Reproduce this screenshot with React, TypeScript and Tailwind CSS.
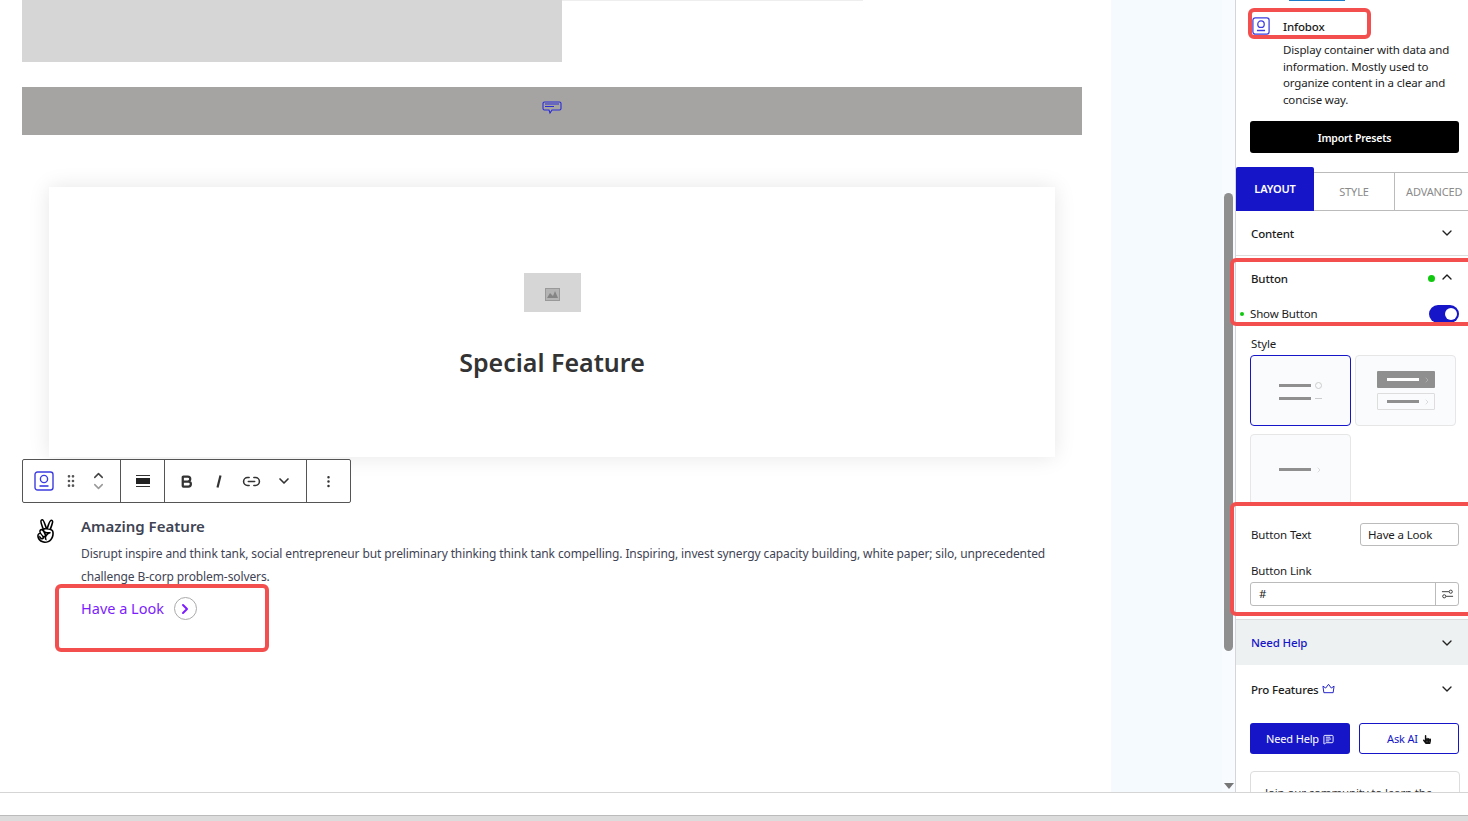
import React from 'react';
import { Bold, ChevronDown, ChevronRight, ChevronUp, Link2, MessageSquareText, MoreVertical, GripVertical } from 'lucide-react';
import { FaAngellist, FaHandPointer } from 'react-icons/fa';

const InfoboxIcon: React.FC<{ className?: string }> = ({ className }) => (
  <svg viewBox="0 0 20 20" fill="none" stroke="#3d3de0" strokeWidth="1.4" className={className}>
    <rect x="1" y="1" width="18" height="18" rx="2.5" />
    <circle cx="10" cy="8" r="3.6" />
    <path d="M5.5 15h9" strokeWidth="1.6" />
  </svg>
);

const Line: React.FC<{ className?: string }> = ({ className }) => (
  <div className={`h-[3px] w-8 ${className ?? 'bg-[#8f8f8f]'}`} />
);

const Redbox: React.FC<{ className: string }> = ({ className }) => (
  <div className={`absolute border-4 border-[#f44f4f] rounded-[6px] pointer-events-none ${className}`} />
);

const AccordionRow: React.FC<{ label: React.ReactNode; className?: string }> = ({ label, className }) => (
  <div className={`flex items-center justify-between pl-[15px] pr-[13px] ${className}`}>
    <span className="pt-px">{label}</span>
    <ChevronDown className="w-4 h-4 text-[#222]" />
  </div>
);

const Canvas: React.FC = () => (
  <div className="w-[1111px] h-full bg-white relative px-[22px] overflow-hidden">
    <div className="h-px w-[401px] bg-[#eeeeee] ml-[440px] -mb-px" />
    <div className="w-[540px] h-[62px] bg-[#d6d6d6]" />
    <div className="w-[1060px] h-12 mt-[25px] bg-[#a5a4a2] flex justify-center pt-[14px]">
      <svg viewBox="0 0 20 14" fill="none" stroke="#2a2ad8" strokeWidth="1.1" className="w-5 h-[14px]">
        <path d="M2.5 1h15a1.5 1.5 0 0 1 1.5 1.5v5a1.500 1.500 0 0 1-1.500 1.500H10l-2 3-1-3H2.500A1.500 1.500 0 0 1 1 7.500v-5A1.500 1.500 0 0 1 2.500 1z" />
        <path d="M3 3h14M3 5.500h9" />
      </svg>
    </div>
    <div className="w-[1006px] h-[270px] mt-[52px] ml-[27px] bg-white shadow-[0_0_20px_rgba(0,0,0,0.1)] flex flex-col items-center pt-[86px]">
      <div className="w-[57px] h-[39px] bg-[#d6d6d6] flex items-center justify-center">
        <svg viewBox="0 0 15 13" className="w-[15px] h-[13px] mt-[3px]">
          <rect x="0.5" y="0.5" width="14" height="12" fill="#b4b4b4" stroke="#999" />
          <path d="M2 10l3-5 3 3 2-5 3 7z" fill="#858585" />
        </svg>
      </div>
      <div className="mt-[31px] text-[25px] leading-[38px] font-semibold text-[#333]">Special Feature</div>
    </div>
    <div className="w-[329px] h-11 mt-[2px] border border-[#555] rounded-[2px] bg-white flex items-stretch text-[#333]">
      <div className="w-[98px] border-r border-[#555] flex items-center pl-[11px]">
        <InfoboxIcon className="w-5 h-5" />
        <GripVertical className="w-4 h-4 ml-[9px] text-[#555]" strokeWidth={2} />
        <div className="flex flex-col ml-3 -space-y-1">
          <ChevronUp className="w-[15px] h-[15px] text-[#444]" strokeWidth={2.4} />
          <ChevronDown className="w-[15px] h-[15px] text-[#999]" strokeWidth={2.4} />
        </div>
      </div>
      <div className="w-11 border-r border-[#555] flex flex-col items-center justify-center gap-[2px]">
        <div className="w-[14px] h-px bg-[#333]" />
        <div className="w-[14px] h-[6px] bg-[#222]" />
        <div className="w-[14px] h-px bg-[#333]" />
      </div>
      <div className="w-[142px] border-r border-[#555] flex items-center pl-[14px]">
        <Bold className="w-[15px] h-[15px]" strokeWidth={3.6} />
        <svg viewBox="0 0 15 15" className="w-[15px] h-[15px] ml-[17px]" stroke="#333" strokeWidth="2.2">
          <path d="M9.500 1.500L6.500 13.500" />
        </svg>
        <Link2 className="w-[19px] h-[19px] ml-[16px]" strokeWidth={2} />
        <ChevronDown className="w-4 h-4 ml-[15px]" strokeWidth={2.5} />
      </div>
      <div className="flex-1 flex items-center justify-center">
        <MoreVertical className="w-[15px] h-[15px]" strokeWidth={2} />
      </div>
    </div>
    <div className="flex mt-[11px] pl-3">
      <FaAngellist className="w-[23px] h-6 mt-[5px] text-black" />
      <div className="ml-6 text-[#3f4454]">
        <div className="text-[15px] leading-[24px] font-semibold">Amazing Feature</div>
        <p className="text-[12px] tracking-[-0.11px] leading-[23px] mt-1 whitespace-nowrap">
          Disrupt inspire and think tank, social entrepreneur but preliminary thinking think tank compelling. Inspiring, invest synergy capacity building, white paper; silo, unprecedented
          <br />
          challenge B-corp problem-solvers.
        </p>
        <div className="flex items-center mt-[9px] text-[14.5px] text-[#7c1dff]">
          Have a Look
          <span className="ml-[10px] w-[23px] h-[23px] rounded-full border border-[#aaa] flex items-center justify-center">
            <ChevronRight className="w-4 h-4" strokeWidth={3} />
          </span>
        </div>
      </div>
    </div>
  </div>
);

const Sidebar: React.FC = () => (
  <div className="w-[233px] h-full bg-white border-l border-[#d5d5d5] overflow-hidden text-[11.5px] tracking-[-0.15px] text-[#1c1c1c] relative">
    <div className="h-px w-14 bg-[#1c7cc8] ml-[53px]" />
    <div className="flex items-start pl-[16px] pt-4">
      <InfoboxIcon className="w-[18px] h-[18px] shrink-0" />
      <div className="ml-[13px] pr-2">
        <div className="leading-5 font-medium">Infobox</div>
        <p className="leading-[16.5px] mt-[5px]">
          Display container with data and information. Mostly used to organize content in a clear and concise way.
        </p>
      </div>
    </div>
    <div className="mx-[14px] mr-[9px] mt-[13px] h-8 pt-[3px] rounded-[3px] bg-black text-white text-[10.5px] tracking-[-0.2px] font-semibold flex items-center justify-center">
      Import Presets
    </div>
    <div className="flex items-end mt-[14px] text-[11px] text-[#8a8a8a]">
      <div className="w-[78px] h-11 bg-[#1616c8] rounded-t-[2px] text-white font-semibold flex items-center justify-center">LAYOUT</div>
      <div className="w-[81px] h-[39px] pt-[2px] border-t border-r border-b border-[#bbb] flex items-center justify-center">STYLE</div>
      <div className="w-[73px] h-[39px] pt-[2px] border-t border-b border-[#bbb] flex items-center pl-[11px] whitespace-nowrap">ADVANCED</div>
    </div>
    <AccordionRow label="Content" className="h-[45px] font-medium border-b border-[#ddd]" />
    <div className="flex items-center justify-between pl-[15px] pr-[13px] h-[45px] font-medium">
      <span>Button</span>
      <span className="flex items-center gap-1">
        <span className="w-[7px] h-[7px] rounded-full bg-[#0fc90f]" />
        <ChevronUp className="w-4 h-4 -mt-[3px]" />
      </span>
    </div>
    <div className="flex items-center justify-between pl-[4px] pr-[9px] h-6 mt-[1px]">
      <span className="flex items-center gap-[6px]">
        <span className="w-1 h-1 rounded-full bg-[#0fc90f]" />
        Show Button
      </span>
      <span className="w-[30px] h-[18px] rounded-full bg-[#1616c8] flex items-center justify-end pr-[2px]">
        <span className="w-[12px] h-[12px] rounded-full bg-white" />
      </span>
    </div>
    <div className="px-[14px] mt-[8px]">
      <div className="leading-5 pl-px">Style</div>
      <div className="grid grid-cols-[101px_101px] gap-x-1 gap-y-2 mt-[1px]">
        <div className="h-[71px] rounded-[4px] border border-[#1616c8] bg-[#fafbfd] flex flex-col items-center justify-center gap-2">
          <div className="flex items-center gap-1"><Line /><span className="w-[7px] h-[7px] rounded-full border border-[#ccc]" /></div>
          <div className="flex items-center gap-1"><Line /><span className="w-[7px] h-px bg-[#ccc]" /></div>
        </div>
        <div className="h-[71px] rounded-[4px] border border-[#e6e6e6] bg-[#fafbfd] flex flex-col items-center justify-center gap-[5px]">
          <div className="w-[58px] h-[17px] rounded-[1px] bg-[#8f8f8f] flex items-center pl-[10px] gap-1">
            <Line className="bg-white" />
            <ChevronRight className="w-2 h-2 text-[#bbb]" />
          </div>
          <div className="w-[58px] h-[17px] rounded-[1px] border border-[#ddd] flex items-center pl-[9px] gap-1">
            <Line />
            <ChevronRight className="w-2 h-2 text-[#ccc]" />
          </div>
        </div>
        <div className="h-[71px] rounded-[4px] border border-[#e6e6e6] bg-[#fafbfd] flex items-center justify-center gap-1">
          <Line />
          <ChevronRight className="w-2 h-2 text-[#ccc]" />
        </div>
      </div>
    </div>
    <div className="flex items-center justify-between pl-[15px] pr-[9px] mt-[18px] h-[23px]">
      <span>Button Text</span>
      <span className="w-[99px] h-[23px] px-[7px] border border-[#bbb] rounded-[3px] flex items-center">Have a Look</span>
    </div>
    <div className="pl-[15px] pr-[9px] mt-[15px] leading-[20px]">Button Link</div>
    <div className="mx-[14px] mr-[9px] h-6 mt-px border border-[#bbb] rounded-[3px] flex items-center">
      <span className="flex-1 pl-2">#</span>
      <span className="w-[23px] h-full border-l border-[#bbb] flex items-center justify-center">
        <svg viewBox="0 0 14 10" fill="none" stroke="#333" strokeWidth="1" className="w-[13px] h-[10px]">
          <circle cx="10.500" cy="2.500" r="1.700" />
          <circle cx="3.500" cy="7.500" r="1.700" />
          <path d="M1 2.500h7.500M5.500 7.500H13" />
        </svg>
      </span>
    </div>
    <div className="h-px bg-[#ddd] mt-[13px]" />
    <AccordionRow label="Need Help" className="h-[45px] bg-[#eef1f2] text-[#1616c8] font-medium" />
    <AccordionRow
      label={
        <span className="flex items-center gap-[3px]">
          Pro Features
          <svg viewBox="0 0 14 11" fill="none" stroke="#1616c8" strokeWidth="1" className="w-[13px] h-[11px] -mt-[2px]">
            <path d="M1 3l3 2 3-4 3 4 3-2-1 7H2z" />
          </svg>
        </span>
      }
      className="h-12 font-medium"
    />
    <div className="flex gap-[9px] pl-[14px] pr-[9px] mt-[10px] text-[11px]">
      <div className="w-[100px] h-[31px] pt-px rounded-[3px] bg-[#1616c8] text-white flex items-center justify-center gap-1">
        Need Help <MessageSquareText className="w-[11px] h-[11px]" />
      </div>
      <div className="w-[100px] h-[31px] pt-px rounded-[3px] border border-[#1616c8] text-[#1616c8] flex items-center justify-center gap-[5px]">
        Ask AI <FaHandPointer className="w-2 h-[11px] text-[#111]" />
      </div>
    </div>
    <div className="mx-[14px] mr-2 mt-[17px] h-10 border border-[#ddd] rounded-t-[4px] pt-[12px] pl-[14px] whitespace-nowrap text-[#333]">
      Join our community to learn the
    </div>
  </div>
);

const App: React.FC = () => {
  return (
    <div className="relative w-[1468px] h-[821px] overflow-hidden bg-white font-['Noto_Sans','Open_Sans',sans-serif]">
      <div className="flex h-[792px]">
        <Canvas />
        <div className="w-[111px] bg-[#f5faff]" />
        <div className="w-[13px] bg-[#f8fbff] relative">
          <div className="absolute left-[2px] top-[193px] w-[9px] h-[458px] rounded-full bg-[#8f8f8f]" />
          <div className="absolute left-[2px] bottom-[3px] w-0 h-0 border-x-[5px] border-x-transparent border-t-[6px] border-t-[#777]" />
        </div>
        <Sidebar />
      </div>
      <div className="h-[23px] border-t border-[#d5d5d5] bg-white" />
      <div className="h-[6px] border-t border-[#bbb] bg-[#dcdcdc]" />

      <Redbox className="left-[1248px] top-[8px] w-[123px] h-[31px]" />
      <Redbox className="left-[1230px] top-[258px] w-[250px] h-[68px]" />
      <Redbox className="left-[1230px] top-[502px] w-[250px] h-[114px]" />
      <Redbox className="left-[55px] top-[584px] w-[214px] h-[68px]" />
    </div>
  );
};

export default App;
